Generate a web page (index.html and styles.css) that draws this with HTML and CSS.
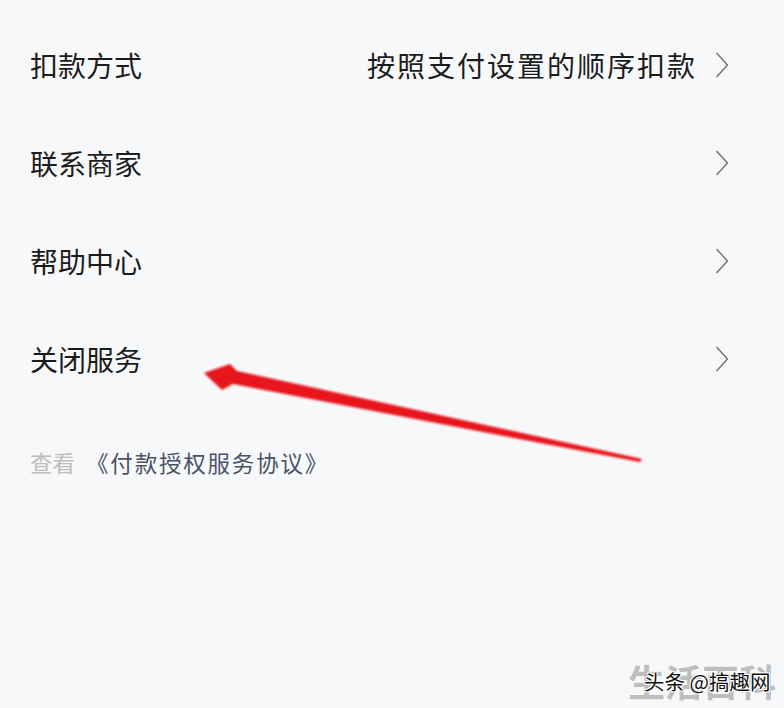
FILE: index.html
```html
<!DOCTYPE html>
<html lang="zh-CN">
<head>
<meta charset="utf-8">
<title>服务设置</title>
<link rel="stylesheet" href="styles.css">
</head>
<body>
<div class="page">
  <ul class="list">
    <li class="row">
      <span class="label">扣款方式</span>
      <span class="value">按照支付设置的顺序扣款</span>
      <svg class="chev" width="14" height="26" viewBox="0 0 14 26"><polyline points="1.5,1 12.5,13 1.5,25" fill="none" stroke="#6f6f6f" stroke-width="1.4"/></svg>
    </li>
    <li class="row">
      <span class="label">联系商家</span>
      <svg class="chev" width="14" height="26" viewBox="0 0 14 26"><polyline points="1.5,1 12.5,13 1.5,25" fill="none" stroke="#6f6f6f" stroke-width="1.4"/></svg>
    </li>
    <li class="row">
      <span class="label">帮助中心</span>
      <svg class="chev" width="14" height="26" viewBox="0 0 14 26"><polyline points="1.5,1 12.5,13 1.5,25" fill="none" stroke="#6f6f6f" stroke-width="1.4"/></svg>
    </li>
    <li class="row">
      <span class="label">关闭服务</span>
      <svg class="chev" width="14" height="26" viewBox="0 0 14 26"><polyline points="1.5,1 12.5,13 1.5,25" fill="none" stroke="#6f6f6f" stroke-width="1.4"/></svg>
    </li>
  </ul>
  <p class="agreement"><span class="muted">查看</span> <span class="link">《付款授权服务协议》</span></p>

  <svg class="arrow" width="784" height="708" viewBox="0 0 784 708">
    <defs>
      <filter id="soft" x="-5%" y="-20%" width="110%" height="140%">
        <feGaussianBlur stdDeviation="0.9"/>
      </filter>
    </defs>
    <polygon filter="url(#soft)" fill="#e8121c" points="204,373 230,364 237,371 642,459 640,462 233,384 222,390"/>
  </svg>

  <div class="watermark">
    <span class="wm-bg">生活百科</span>
    <span class="wm-fg">头条 @搞趣网</span>
  </div>
</div>
</body>
</html>
```
FILE: styles.css
```css
html, body {
  margin: 0;
  padding: 0;
}
body {
  background: #f7f8fa;
  font-family: "Noto Sans CJK SC", "Noto Sans", sans-serif;
  width: 784px;
  height: 708px;
  overflow: hidden;
}
.page {
  position: relative;
  width: 784px;
  height: 708px;
}
.list {
  list-style: none;
  margin: 0;
  padding: 16px 55px 0 30px;
}
.row {
  display: flex;
  align-items: center;
  height: 98px;
}
.label {
  font-size: 28px;
  color: #1c1c1c;
  flex: 1;
  line-height: 1;
}
.value {
  font-size: 28px;
  color: #1c1c1c;
  letter-spacing: 2px;
  margin-right: 18px;
  line-height: 1;
}
.chev {
  display: block;
  flex: none;
}
.agreement {
  margin: 39px 0 0 30px;
  font-size: 22.5px;
  line-height: 30px;
}
.muted {
  color: #bdbdbd;
}
.link {
  color: #4c5266;
  margin-left: 6px;
  letter-spacing: 1.8px;
}
.arrow {
  position: absolute;
  left: 0;
  top: 0;
  pointer-events: none;
}
.watermark {
  position: absolute;
  right: 6px;
  bottom: 7px;
  width: 150px;
  height: 40px;
}
.wm-bg {
  position: absolute;
  left: 0;
  top: 0;
  font-size: 37px;
  line-height: 40px;
  font-weight: 700;
  color: rgba(140, 140, 140, 0.55);
  white-space: nowrap;
}
.wm-fg {
  position: absolute;
  left: 16px;
  top: 8px;
  font-size: 20.5px;
  line-height: 24px;
  color: #111;
  white-space: nowrap;
  text-shadow: 1px 1px 0 #fff, -1px -1px 0 #fff, 1px -1px 0 #fff, -1px 1px 0 #fff;
}
```
